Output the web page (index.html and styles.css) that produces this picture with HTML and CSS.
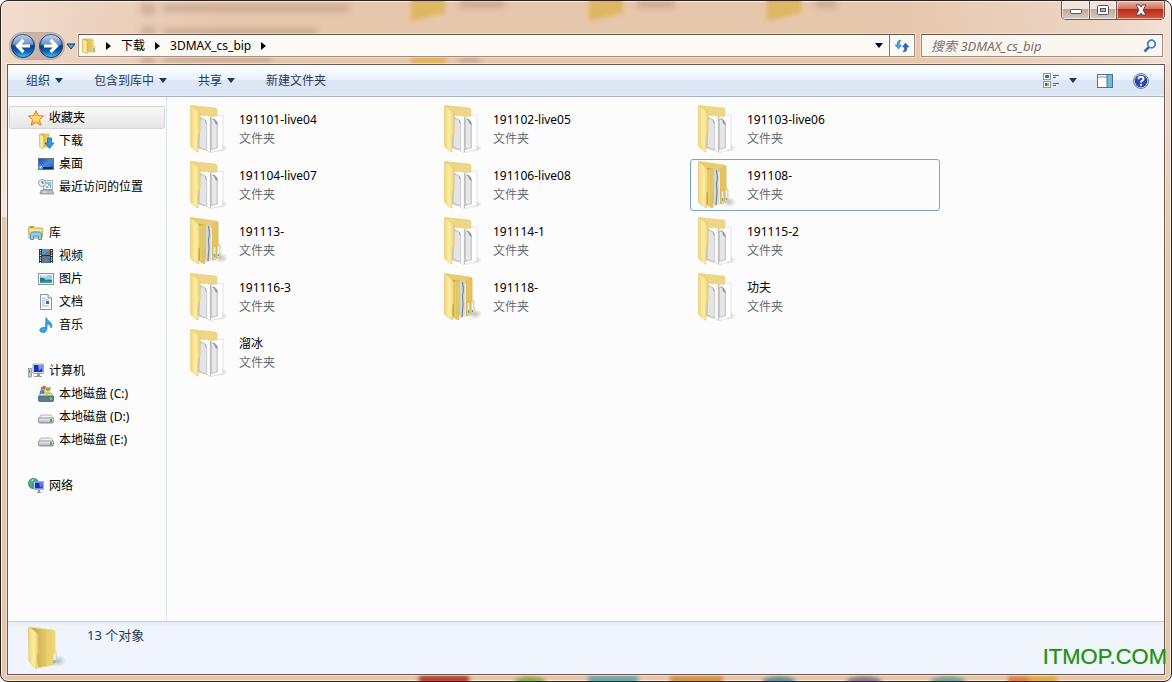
FILE: index.html
```html
<!DOCTYPE html>
<html lang="zh-CN">
<head>
<meta charset="utf-8">
<title>3DMAX_cs_bip</title>
<link rel="stylesheet" href="styles.css">
</head>
<body>
<svg class="defs" aria-hidden="true">
  <defs>
    <linearGradient id="gFlap" x1="0" x2="1"><stop offset="0" stop-color="#f3d676"/><stop offset=".55" stop-color="#fdeea6"/><stop offset="1" stop-color="#efcf6b"/></linearGradient>
    <linearGradient id="gBack" x1="0" x2="1" y2="1"><stop offset="0" stop-color="#d2b24e"/><stop offset=".5" stop-color="#f3de8e"/><stop offset="1" stop-color="#e8c855"/></linearGradient>
    <linearGradient id="gInner" x1="0" x2="1"><stop offset="0" stop-color="#b89843"/><stop offset=".5" stop-color="#dcc063"/><stop offset="1" stop-color="#efd36a"/></linearGradient>
    <linearGradient id="gPaper" x1="0" x2="1"><stop offset="0" stop-color="#bdbdbd"/><stop offset="1" stop-color="#f3f3f3"/></linearGradient>
    <linearGradient id="gOrb" x1="0" x2="0" y1="0" y2="1"><stop offset="0" stop-color="#aecbea"/><stop offset=".45" stop-color="#3d74b8"/><stop offset=".5" stop-color="#0c3d86"/><stop offset=".75" stop-color="#1266b8"/><stop offset="1" stop-color="#41d3fb"/></linearGradient>
    <linearGradient id="gBlue" x1="0" x2="1" y2="1"><stop offset="0" stop-color="#1b3fa8"/><stop offset=".5" stop-color="#4b87df"/><stop offset="1" stop-color="#2359bb"/></linearGradient>
    <linearGradient id="gStar" x1="0" x2="0" y1="0" y2="1"><stop offset="0" stop-color="#ffb43c"/><stop offset=".6" stop-color="#ffe57a"/><stop offset="1" stop-color="#ff9d1e"/></linearGradient>
    <linearGradient id="gDisk" x1="0" x2="0" y1="0" y2="1"><stop offset="0" stop-color="#f7f7f9"/><stop offset="1" stop-color="#a9acb3"/></linearGradient>
    <radialGradient id="gShade"><stop offset="0" stop-color="#777" stop-opacity=".45"/><stop offset="1" stop-color="#777" stop-opacity="0"/></radialGradient>
  </defs>
  <symbol id="folder-docs" viewBox="0 0 38 48">
    <ellipse cx="30" cy="43" rx="8" ry="4" fill="url(#gShade)"/>
    <path d="M1 .5 25 3Q27 3 27 5V12H8Z" fill="#eed684" stroke="#e3cd80" stroke-width=".6"/>
    <path d="M9 11 16 10 21 14V47.500L8 43Z" fill="url(#gPaper)"/>
    <path d="M10 14Q15 12 17 19V45L9 42Z" fill="#e4e4e4" stroke="#b4b4b4" stroke-width=".6"/>
    <path d="M9 10.500 20 11V47.500L17 46V19Q16 14 12 13Z" fill="#fff" stroke="#cfcfcf" stroke-width=".5"/>
    <path d="M12 13Q15 14 15.500 18L17 19Q16 14 12 13Z" fill="#a3a3a3"/>
    <path d="M21 12 33 10V44.500L21 47.500Z" fill="#fff" stroke="#d2d2d2" stroke-width=".6"/>
    <path d="M21.500 14 24 14Q27 15 27.500 20V43L21.500 44.500Z" fill="#dcdcdc" stroke="#b2b2b2" stroke-width=".6"/>
    <path d="M23 15V43M25 17V43" stroke="#f3f3f3"/>
    <path d="M22 13.500Q27 14 28 20L25 18.500Q25 15 22 13.500Z" fill="#999"/>
    <path d="M20.500 12V47" stroke="#a9a9a9" stroke-width=".6"/>
    <path d="M.5 1.500Q.5 0 2 1L9 7Q10 8 10 10V29Q8 30 8 32V47L7 47 1 42Q.5 41 .5 39Z" fill="url(#gFlap)" stroke="#e5c669" stroke-width=".6"/>
  </symbol>
  <symbol id="folder-full" viewBox="0 0 38 48">
    <ellipse cx="31" cy="41" rx="7" ry="5" fill="url(#gShade)"/>
    <path d="M1 .5 26 4Q28 4 28 6V40L10 43Z" fill="#e9cd70" stroke="#e0c56a" stroke-width=".6"/>
    <path d="M9 7 15 8Q16 9 16 11V30Q15 31 15 33V46L14 47 8 43Z" fill="url(#gInner)" stroke="#c5a449" stroke-width=".5"/>
    <path d="M11 9V44" stroke="#f4df90"/>
    <path d="M16 8 21 9 23 11V43L16 45Z" fill="#d7d9d9"/>
    <path d="M18.500 9 19.500 17 18.500 22 19 31 18 44" fill="none" stroke="#6f8790" stroke-width="1.200"/>
    <path d="M21.500 11V43" stroke="#fff" stroke-width="1.200"/>
    <path d="M22 8 28 5V40L22 43Z" fill="#e5c461" stroke="#d5b251" stroke-width=".5"/>
    <path d="M23 29H26V42L23 43Z" fill="#f6df8c" stroke="#c9a646" stroke-width=".6"/>
    <path d="M27 28H30V40L27 41Z" fill="#f9e69d" stroke="#d1af50" stroke-width=".6"/>
    <path d="M24.500 31V40M28.500 30V39" stroke="#fff"/><path d="M24.500 37V40M28.500 37V39" stroke="#5799a9"/>
    <path d="M.5 1.500Q.5 0 2 1L9 8Q10 9 10 11V30Q8.500 31 8.500 33V47L8 47 1 42Q.5 41 .5 39Z" fill="url(#gFlap)" stroke="#dcbd5e" stroke-width=".6"/>
  </symbol>
  <symbol id="folder-plain" viewBox="0 0 38 44">
    <ellipse cx="30" cy="35" rx="8" ry="6" fill="url(#gShade)"/>
    <path d="M1 1 25 4Q27 4 27 6V37Q27 39 25 39L10 42Z" fill="url(#gInner)" stroke="#efdd91"/>
    <path d="M18 4 26 5V38L18 39Z" fill="#edd477" opacity=".6"/>
    <path d="M25 25H28V36L25 37Z" fill="#f8e8a0" stroke="#dabd55" stroke-width=".6"/><path d="M26.500 28V34" stroke="#fff" stroke-width="1.500"/><path d="M26.500 34V37" stroke="#53aebc" stroke-width="1.500"/>
    <path d="M.5 2Q.5 0 3 2L9 7Q10 8 10 10V28Q9 29 9 31V42L8 43 1 35Z" fill="url(#gFlap)" stroke="#e4c45d" stroke-width=".7"/>
  </symbol>
  <symbol id="folder-mini" viewBox="0 0 16 16">
    <path d="M2 1H11L12 2V14H3Z" fill="url(#gInner)" stroke="#d6b54e" stroke-width=".6"/>
    <path d="M1.500 1 6.500 3V11L6 16 1.500 14Z" fill="url(#gFlap)" stroke="#d4b048" stroke-width=".6"/>
    <path d="M11 8H14V14H11Z" fill="#f6df82" stroke="#d6b54e" stroke-width=".5"/><path d="M13 10V14" stroke="#4aa7c4"/>
  </symbol>
  <symbol id="star" viewBox="0 0 16 16"><path d="M8 .7 10.200 5.600 15.500 6.100 11.500 9.700 12.800 15.200 8 12.300 3.200 15.200 4.500 9.700.5 6.100 5.800 5.600Z" fill="url(#gStar)" stroke="#e8801c"/></symbol>
  <symbol id="downloads" viewBox="0 0 16 16">
    <path d="M2 1H11V14H3Z" fill="url(#gInner)" stroke="#d0af48" stroke-width=".6"/><path d="M1.500 1 6 3V12L5 16 1.500 14Z" fill="url(#gFlap)" stroke="#d0af48" stroke-width=".6"/>
    <path d="M9.500 5H13.500V10H16L11.500 15.500 7 10H9.500Z" fill="#2b98df" stroke="#1262a6" stroke-width=".7"/>
  </symbol>
  <symbol id="desktop" viewBox="0 0 16 16"><rect x=".5" y="2.500" width="15" height="11" fill="url(#gBlue)" stroke="#65748c"/><path d="M5 11H15V13H5Z" fill="#1b2b48"/><circle cx="2.500" cy="11.500" r="2" fill="#55b6e8"/><path d="M2 12 4 10" stroke="#fff"/></symbol>
  <symbol id="recent" viewBox="0 0 16 16">
    <rect x="5.500" y="1.500" width="9" height="9" fill="#e7f0f7" stroke="#a2adb6"/><path d="M8 4H13M10 6H13M8 8H10M12 8H13" stroke="#3389bb"/><path d="M3 11H14L16 15H2Z" fill="#b8bcc1" stroke="#858b92" stroke-width=".7"/><path d="M5 13H9" stroke="#eee"/>
    <circle cx="4" cy="4" r="3.500" fill="#f3f3f3" stroke="#9aa0a5"/><path d="M4 2V4H6" fill="none" stroke="#555"/>
  </symbol>
  <symbol id="library" viewBox="0 0 16 16"><path d="M.5 3 1.500 1.500H6L7 3H14.500L15 5 14 13H1Z" fill="#f0d778" stroke="#b99a3e" stroke-width=".8"/><path d="M2 2.500H5" stroke="#4aab45"/><path d="M1 5H15" stroke="#fff1b2"/><path d="M2.500 14.500V9Q3 7 5 7H11Q13 7 13.500 9V14.500H10.500V11H5.500V14.500Z" fill="#8bd2f5" stroke="#2f86b9" stroke-width=".8"/></symbol>
  <symbol id="video" viewBox="0 0 16 16"><rect x="1" y="1" width="14" height="14" fill="#222b36"/><rect x="4" y="1" width="8" height="6" fill="#4c9bd0"/><rect x="4" y="8" width="8" height="7" fill="#347fb8"/><path d="M5 5 8 5 12 2V7H8ZM6 10 8 9 11 14H6Z" fill="#b5644a"/><path d="M2.500 2V15M13.500 2V15" stroke="#fff" stroke-width="1.300" stroke-dasharray="1.200 1.200"/></symbol>
  <symbol id="picture" viewBox="0 0 16 16"><rect x=".5" y="2.500" width="15" height="11" fill="#fff" stroke="#8795a2"/><rect x="2" y="4" width="12" height="8" fill="#8fd0ee"/><path d="M2 7Q5 6 8 9 11 8 14 9V12H2Z" fill="#2e7a68"/><path d="M2 11Q8 9 14 10V12H2Z" fill="#1aa3b1"/><path d="M3 5H9" stroke="#fff"/></symbol>
  <symbol id="document" viewBox="0 0 16 16"><path d="M2.500 .5H10L13.500 4V15.500H2.500Z" fill="#fff" stroke="#87939f"/><path d="M10 .5V4H13.500" fill="#dce4ea" stroke="#87939f"/><path d="M4 4H8M4 6H11M4 8H7M4 10H7M4 12H11" stroke="#8ba5ba" stroke-width=".8"/><path d="M8 7H11V10H8Z" fill="#316fad"/></symbol>
  <symbol id="music" viewBox="0 0 16 16"><path d="M8 .5Q9 3 12 5 15 7 13 11 13 7 9 7V12Q8 16 4.500 15.500 1 15 2 12 4 9.500 7.500 10.500Z" fill="#36a4e4" stroke="#1f7cc0" stroke-width=".7"/></symbol>
  <symbol id="computer" viewBox="0 0 16 16"><rect x="5" y="1" width="10.500" height="9.500" fill="#e3e6ed" stroke="#858d9b" stroke-width=".7"/><rect x="6" y="2" width="8.500" height="7" fill="#1230c8"/><path d="M10 2H14.500V5L11 8Z" fill="#7492f0"/><path d="M9 10H12V13H14V14H6V13H9Z" fill="#9299a8"/><rect x=".5" y="5.500" width="3" height="8.500" fill="#c8ccd2" stroke="#747d88" stroke-width=".6"/><path d="M1.500 7V10" stroke="#35ae38"/></symbol>
  <symbol id="disk" viewBox="0 0 16 16"><path d="M3 6H13L15.500 9.500H.5Z" fill="#f0f1f3" stroke="#999da4" stroke-width=".7"/><rect x=".5" y="9" width="15" height="5" rx="1.500" fill="url(#gDisk)" stroke="#777b83" stroke-width=".8"/><path d="M13 10V13" stroke="#2ba62b" stroke-width="1.600"/></symbol>
  <symbol id="system-disk" viewBox="0 0 16 16"><path d="M3 7H13L15.500 10.500H.5Z" fill="#dde5e9" stroke="#72858f" stroke-width=".7"/><rect x=".5" y="10" width="15" height="5.500" rx="1" fill="#577d8b" stroke="#456471" stroke-width=".8"/><path d="M13 11V14" stroke="#6be154" stroke-width="1.500"/><path d="M3.500 1Q6 -1 8 .5L7 4Q5 3 2.500 4Z" fill="#e75a22"/><path d="M8.500 1Q10 2 13 1L12 4.500Q9 5.500 7.500 4Z" fill="#70b32b"/><path d="M2.300 4.500Q4.500 3.500 6.800 4.500L6 8Q4 7 1.500 8Z" fill="#3a80d4"/><path d="M7.500 5Q9 6 12 5L11 8.500Q8 9.500 6.500 8Z" fill="#f4be28"/></symbol>
  <symbol id="network" viewBox="0 0 16 16"><circle cx="5.500" cy="5.500" r="5.200" fill="#3b94d4" stroke="#286b9f" stroke-width=".6"/><path d="M1 4Q3 0 6 2L5 5 3 6 4 9 2 8ZM7 1 10 4 8 5Z" fill="#55bd4a"/><path d="M3 2 6 1 5 3Z" fill="#c8ecff"/><rect x="6" y="3.500" width="9.700" height="8" fill="#e4e7ee" stroke="#828a98" stroke-width=".6"/><rect x="7" y="4.500" width="7.700" height="6" fill="#1731bd"/><path d="M11 4.500H14.700V7L12 10Z" fill="#587af0"/><path d="M10 12H12V14H13V15H9V14H10Z" fill="#8c93a1"/></symbol>
</svg>

<div class="window">
  <svg class="glass" aria-hidden="true">
    <g class="glass-folders">
      <path d="M410-4H444V12L410 20ZM588-4H622V12L588 20ZM766-4H800V12L766 20Z"/>
      <path d="M410 50H445V66H410Z"/>
    </g>
    <g class="glass-text">
      <path d="M140 2H154V14H140ZM140 25H154V37H140ZM140 52H154V64H140Z"/>
      <path d="M162 7H348M162 31H316M162 58H270M458 3H504M636 3H674M814 3H836M458 59H479"/>
    </g>
  </svg>
  <svg class="glass glass-bottom" aria-hidden="true">
    <g>
      <path fill="#a5271a" d="M418 1H468V10H418Z"/><ellipse fill="#7da13c" cx="529" cy="9" rx="16" ry="7"/>
      <path fill="#5b9da2" d="M587 1H637V10H587Z"/><path fill="#cc8934" d="M669 1H722V10H669Z"/>
      <ellipse fill="#527f90" cx="778" cy="8" rx="17" ry="6"/><ellipse fill="#746b83" cx="863" cy="8" rx="18" ry="6"/>
      <ellipse fill="#639795" cx="947" cy="8" rx="18" ry="6"/><path fill="#d96e23" d="M1007 2H1027V10H1007Z"/><path fill="#dda313" d="M1027 2H1056V10H1027Z"/>
    </g>
  </svg>

  <header class="caption">
    <div class="window-buttons">
      <button class="win" aria-label="最小化"><svg width="14" height="10"><rect x="1.500" y="4.500" width="11" height="4" rx="1" fill="#fff" stroke="#57535a"/></svg></button>
      <button class="win" aria-label="最大化"><svg width="14" height="12"><rect x="1.500" y="1.500" width="11" height="9" rx="1" fill="#fff" stroke="#57535a"/><rect x="4.500" y="4.500" width="5" height="3" fill="#c9b6aa" stroke="#57535a"/></svg></button>
      <button class="win close" aria-label="关闭"><svg width="14" height="12"><path d="M2 1H6L7 3 8 1H12L9 6 12 11H8L7 9 6 11H2L5 6Z" fill="#fff" stroke="#61434a"/></svg></button>
    </div>
  </header>

  <div class="navigation">
    <div class="orbs">
      <button class="orb" aria-label="后退"><svg viewBox="0 0 26 26"><circle cx="13" cy="13" r="11.500" fill="url(#gOrb)" stroke="#153d77"/><path d="M3 11A10 10 0 0 1 23 11Q13 14 3 11Z" fill="#fff" opacity=".2"/><path d="M13.500 7 7.500 13 13.500 19M8 13H20" fill="none" stroke="#fff" stroke-width="3.200"/></svg></button>
      <button class="orb" aria-label="前进"><svg viewBox="0 0 26 26"><circle cx="13" cy="13" r="11.500" fill="url(#gOrb)" stroke="#153d77"/><path d="M3 11A10 10 0 0 1 23 11Q13 14 3 11Z" fill="#fff" opacity=".2"/><path d="M12.500 7 18.500 13 12.500 19M18 13H6" fill="none" stroke="#fff" stroke-width="3.200"/></svg></button>
    </div>
    <button class="history" aria-label="最近的页面"><svg width="10" height="7"><path d="M1 1H9L5 6Z" fill="#3daede" stroke="#1b3558"/></svg></button>
    <div class="address">
      <svg class="i16"><use href="#folder-mini"/></svg>
      <nav class="crumbs" aria-label="地址">
        <svg class="tick"><path d="M0 0 5 4 0 8Z"/></svg>
        <button>下载</button>
        <svg class="tick"><path d="M0 0 5 4 0 8Z"/></svg>
        <button>3DMAX_cs_bip</button>
        <svg class="tick"><path d="M0 0 5 4 0 8Z"/></svg>
      </nav>
      <button class="drop" aria-label="以前的位置"><svg class="down"><path d="M0 0H8L4 5Z"/></svg></button>
      <button class="refresh" aria-label="刷新"><svg width="16" height="16"><path d="M7 2Q3 2 3 6V7H1L4.500 11 7.500 7H5.500Q5 4 7 2Z" fill="#4b9fdb" stroke="#2f7fbe" stroke-width=".5"/><path d="M9 14Q13 14 13 10V9H15L11.500 5 8.500 9H10.500Q11 12 9 14Z" fill="#2a67b0" stroke="#1f5597" stroke-width=".5"/></svg></button>
    </div>
    <div class="search">
      <input type="text" aria-label="搜索" placeholder="搜索 3DMAX_cs_bip">
      <button aria-label="开始搜索"><svg width="14" height="14"><path d="M6 8 1.500 12.500" stroke="#3a69b7" stroke-width="2.500"/><circle cx="8.500" cy="5" r="3.800" fill="#fff" stroke="#3b83cc" stroke-width="1.800"/></svg></button>
    </div>
  </div>

  <div class="frame">
    <div class="toolbar">
      <button>组织<svg class="down"><path d="M0 0H8L4 5Z"/></svg></button>
      <button>包含到库中<svg class="down"><path d="M0 0H8L4 5Z"/></svg></button>
      <button>共享<svg class="down"><path d="M0 0H8L4 5Z"/></svg></button>
      <button>新建文件夹</button>
      <div class="tools">
        <button aria-label="更改视图"><svg class="i16"><rect x=".5" y=".5" width="7" height="6" fill="#fff" stroke="#8c98a4"/><rect x="2" y="2" width="4" height="3" fill="#258398"/><rect x=".5" y="8.500" width="7" height="6" fill="#fff" stroke="#8c98a4"/><path d="M2 10H4V13H2Z" fill="#3a7a26"/><path d="M4 10H6V13H4Z" fill="#d4a12b"/><path d="M10 2.500H16M10 4.500H13M10 10.500H16M10 12.500H13" stroke="#576375"/></svg><svg class="down"><path d="M0 0H8L4 5Z"/></svg></button>
        <button aria-label="预览窗格"><svg class="i16"><rect x=".5" y="1.500" width="15" height="13" fill="#fff" stroke="#53708c"/><path d="M1 4H10" stroke="#7894ac"/><rect x="10" y="2" width="5" height="12" fill="#68bfd9"/><path d="M10 1V15" stroke="#53708c"/></svg></button>
        <button aria-label="获取帮助"><svg class="i16" viewBox="0 0 16 16"><circle cx="8" cy="8" r="7.500" fill="#d3dceb" stroke="#71829f"/><circle cx="8" cy="8" r="6.300" fill="#2749ac"/><path d="M5.500 6.200Q5.500 3.800 8 3.800T10.500 6.100Q10.500 7.200 8.900 7.900 8 8.400 8 9.600" fill="none" stroke="#fff" stroke-width="1.900"/><circle cx="8" cy="11.800" r="1.100" fill="#fff"/></svg></button>
      </div>
    </div>

    <div class="content">
      <nav class="sidebar">
        <section>
          <h2 class="selected"><svg class="i16"><use href="#star"/></svg>收藏夹</h2>
          <ul>
            <li><svg class="i16"><use href="#downloads"/></svg>下载</li>
            <li><svg class="i16"><use href="#desktop"/></svg>桌面</li>
            <li><svg class="i16"><use href="#recent"/></svg>最近访问的位置</li>
          </ul>
        </section>
        <section>
          <h2><svg class="i16"><use href="#library"/></svg>库</h2>
          <ul>
            <li><svg class="i16"><use href="#video"/></svg>视频</li>
            <li><svg class="i16"><use href="#picture"/></svg>图片</li>
            <li><svg class="i16"><use href="#document"/></svg>文档</li>
            <li><svg class="i16"><use href="#music"/></svg>音乐</li>
          </ul>
        </section>
        <section>
          <h2><svg class="i16"><use href="#computer"/></svg>计算机</h2>
          <ul>
            <li><svg class="i16"><use href="#system-disk"/></svg>本地磁盘 (C:)</li>
            <li><svg class="i16"><use href="#disk"/></svg>本地磁盘 (D:)</li>
            <li><svg class="i16"><use href="#disk"/></svg>本地磁盘 (E:)</li>
          </ul>
        </section>
        <section>
          <h2><svg class="i16"><use href="#network"/></svg>网络</h2>
        </section>
      </nav>

      <main class="files">
        <button class="file"><svg><use href="#folder-docs"/></svg><span>191101-live04<small>文件夹</small></span></button>
        <button class="file"><svg><use href="#folder-docs"/></svg><span>191102-live05<small>文件夹</small></span></button>
        <button class="file"><svg><use href="#folder-docs"/></svg><span>191103-live06<small>文件夹</small></span></button>
        <button class="file"><svg><use href="#folder-docs"/></svg><span>191104-live07<small>文件夹</small></span></button>
        <button class="file"><svg><use href="#folder-docs"/></svg><span>191106-live08<small>文件夹</small></span></button>
        <button class="file focused"><svg><use href="#folder-full"/></svg><span>191108-<small>文件夹</small></span></button>
        <button class="file"><svg><use href="#folder-full"/></svg><span>191113-<small>文件夹</small></span></button>
        <button class="file"><svg><use href="#folder-docs"/></svg><span>191114-1<small>文件夹</small></span></button>
        <button class="file"><svg><use href="#folder-docs"/></svg><span>191115-2<small>文件夹</small></span></button>
        <button class="file"><svg><use href="#folder-docs"/></svg><span>191116-3<small>文件夹</small></span></button>
        <button class="file"><svg><use href="#folder-full"/></svg><span>191118-<small>文件夹</small></span></button>
        <button class="file"><svg><use href="#folder-docs"/></svg><span>功夫<small>文件夹</small></span></button>
        <button class="file"><svg><use href="#folder-docs"/></svg><span>溜冰<small>文件夹</small></span></button>
      </main>
    </div>

    <footer class="details">
      <svg width="38" height="44"><use href="#folder-plain"/></svg>
      <p>13 个对象</p>
    </footer>
  </div>
  <div class="watermark">ITMOP.COM</div>
</div>
</body>
</html>
```
FILE: styles.css
```css
* { box-sizing: border-box; }

body {
  margin: 0;
  background: #fff;
  color: #000;
  font: 12px/18px "Noto Sans", "Noto Sans CJK SC", sans-serif;
}

button {
  display: flex;
  align-items: center;
  justify-content: center;
  margin: 0;
  padding: 0;
  border: 0;
  background: none;
  color: inherit;
  font: inherit;
}

svg { flex: none; display: block; }
.defs { position: absolute; width: 0; height: 0; }
.i16 { width: 16px; height: 16px; }
.down { width: 8px; height: 5px; fill: currentColor; }
.tick { width: 5px; height: 8px; }

.window {
  position: relative;
  display: flex;
  flex-direction: column;
  min-height: 100vh;
  padding: 0 6px 6px;
  overflow: hidden;
  border: 1px solid #2c2320;
  border-radius: 8px;
  background:
    linear-gradient(105deg, #f1ddcf 0, #ecd3c0 90px, transparent 220px) 0 0 / 100% 64px no-repeat,
    linear-gradient(255deg, #f3e4d9 0, #edd7c7 60px, transparent 260px) 0 0 / 100% 64px no-repeat,
    linear-gradient(#f0d9c9, #f5e6db) 0 64px / 7px 152px no-repeat,
    linear-gradient(#f0d9c9, #e7c7ad) 100% 64px / 7px 200px no-repeat,
    #e7c7ac;
  box-shadow: inset 0 0 0 1px #fbefe6;
}

.glass { position: absolute; top: 0; left: 0; width: 100%; height: 64px; }
.glass-bottom { top: auto; bottom: 0; height: 7px; }
.glass-folders { fill: #dfb662; filter: blur(2px); }
.glass-text { fill: #b9937a; stroke: #a98975; stroke-width: 7; opacity: .5; filter: blur(3px); }
.glass-text path:first-child { stroke: none; }
.glass-bottom g { filter: blur(2px); opacity: .85; }

.caption { position: relative; display: flex; justify-content: flex-end; height: 32px; }
.window-buttons {
  display: flex;
  height: 19px;
  overflow: hidden;
  border: 1px solid #6b5b54;
  border-top: 0;
  border-radius: 0 0 5px 5px;
}
.win {
  width: 28px;
  border-right: 1px solid #6b5b54;
  background: linear-gradient(#efe3db 0 45%, #bda89b 45%, #dccabe);
  box-shadow: inset 0 0 0 1px #ffffff88;
}
.win:nth-child(2) { width: 27px; }
.win.close {
  width: 47px;
  border: 0;
  background: linear-gradient(#e5a794 0 10%, #d0705b 45%, #b52b14 45%, #d9583a);
}

.navigation { position: relative; display: flex; align-items: center; height: 26px; margin: 0 2px 5px 3px; }
.orbs {
  display: flex;
  gap: 2px;
  border-radius: 13px;
  background: #8e7d7366;
  box-shadow: 0 0 0 1px #8e7d7377;
}
.orb { width: 26px; height: 26px; border-radius: 50%; }
.orb svg { width: 26px; height: 26px; }
.history { width: 14px; height: 24px; }
.address, .search {
  display: flex;
  align-items: center;
  align-self: flex-start;
  height: 23px;
  margin-top: 1px;
  border: 1px solid #a08f84;
  border-top-color: #655750;
  background: #fdf9f5;
  box-shadow: 0 0 0 1px #ffffff66;
}
.address { flex: 1; padding-left: 2px; }
.crumbs { display: flex; flex: 1; align-items: center; gap: 10px; padding-left: 9px; }
.drop { width: 20px; height: 21px; color: #00003c; }
.refresh { width: 25px; height: 21px; border-left: 1px solid #85766c; }
.search { width: 242px; margin-left: 6px; padding: 0 5px 0 9px; background: #fcf6f1; }
.search input {
  flex: 1;
  min-width: 0;
  padding: 0;
  border: 0;
  outline: 0;
  background: none;
  font: inherit;
  font-size: 13px;
  font-style: italic;
}
.search input::placeholder { color: #77716d; opacity: 1; }

.frame {
  position: relative;
  display: flex;
  flex: 1;
  flex-direction: column;
  border: 1px solid #695850;
  background: #fcfcfc;
  box-shadow: 0 0 0 1px #ffffff77;
}
.toolbar {
  display: flex;
  align-items: center;
  gap: 31px;
  height: 32px;
  padding: 0 15px 0 18px;
  border-bottom: 1px solid #a5b3c7;
  background: linear-gradient(#fdfeff, #e9f3fd 15px, #dce6f4 15px, #dce6f4 29px, #e7eff9 31px);
  color: #1e395b;
}
.toolbar button { gap: 5px; }
.tools { display: flex; align-items: center; gap: 20px; margin-left: auto; }
.tools button:first-child { gap: 10px; }

.content { display: flex; flex: 1; }
.sidebar {
  display: flex;
  flex-direction: column;
  gap: 23px;
  width: 159px;
  padding: 9px 1px 0;
  border-right: 1px solid #d6e3f1;
}
.sidebar h2, .sidebar li {
  display: flex;
  align-items: center;
  height: 23px;
  gap: 5px;
  border: 1px solid transparent;
  font-size: 12px;
  font-weight: 400;
  white-space: nowrap;
}
.sidebar h2 { margin: 0; padding-left: 18px; }
.sidebar ul { margin: 0; padding: 0 0 0 28px; list-style: none; }
.sidebar .selected {
  border-color: #d6d6d6;
  border-radius: 3px;
  background: linear-gradient(#f8f8f8, #e6e6e6);
}

.files {
  display: grid;
  flex: 1;
  grid-template-columns: repeat(auto-fill, 250px);
  align-content: start;
  gap: 4px;
  padding: 6px 0 6px 15px;
}
.file {
  justify-content: flex-start;
  gap: 11px;
  height: 52px;
  padding-left: 7px;
  border: 1px solid transparent;
  border-radius: 3px;
  line-height: 19px;
  text-align: left;
}
.file svg { width: 38px; height: 48px; }
.file small { display: block; color: #6d6d6d; font-size: 12px; }
.focused { border-color: #7da2ce; }

.details {
  display: flex;
  gap: 21px;
  height: 53px;
  padding: 4px 20px;
  border-top: 1px solid #c3d3e5;
  background: linear-gradient(#e4ebf5, #f0f4fc 4px);
  color: #1e395b;
  font-size: 13px;
}
.details p { margin: 0; }

.watermark {
  position: absolute;
  right: 4px;
  bottom: 12px;
  color: #2c8b1f;
  font: 22px/24px "Liberation Sans", Arial, sans-serif;
  text-shadow: 0 0 1px #7ddc6d;
}
```
